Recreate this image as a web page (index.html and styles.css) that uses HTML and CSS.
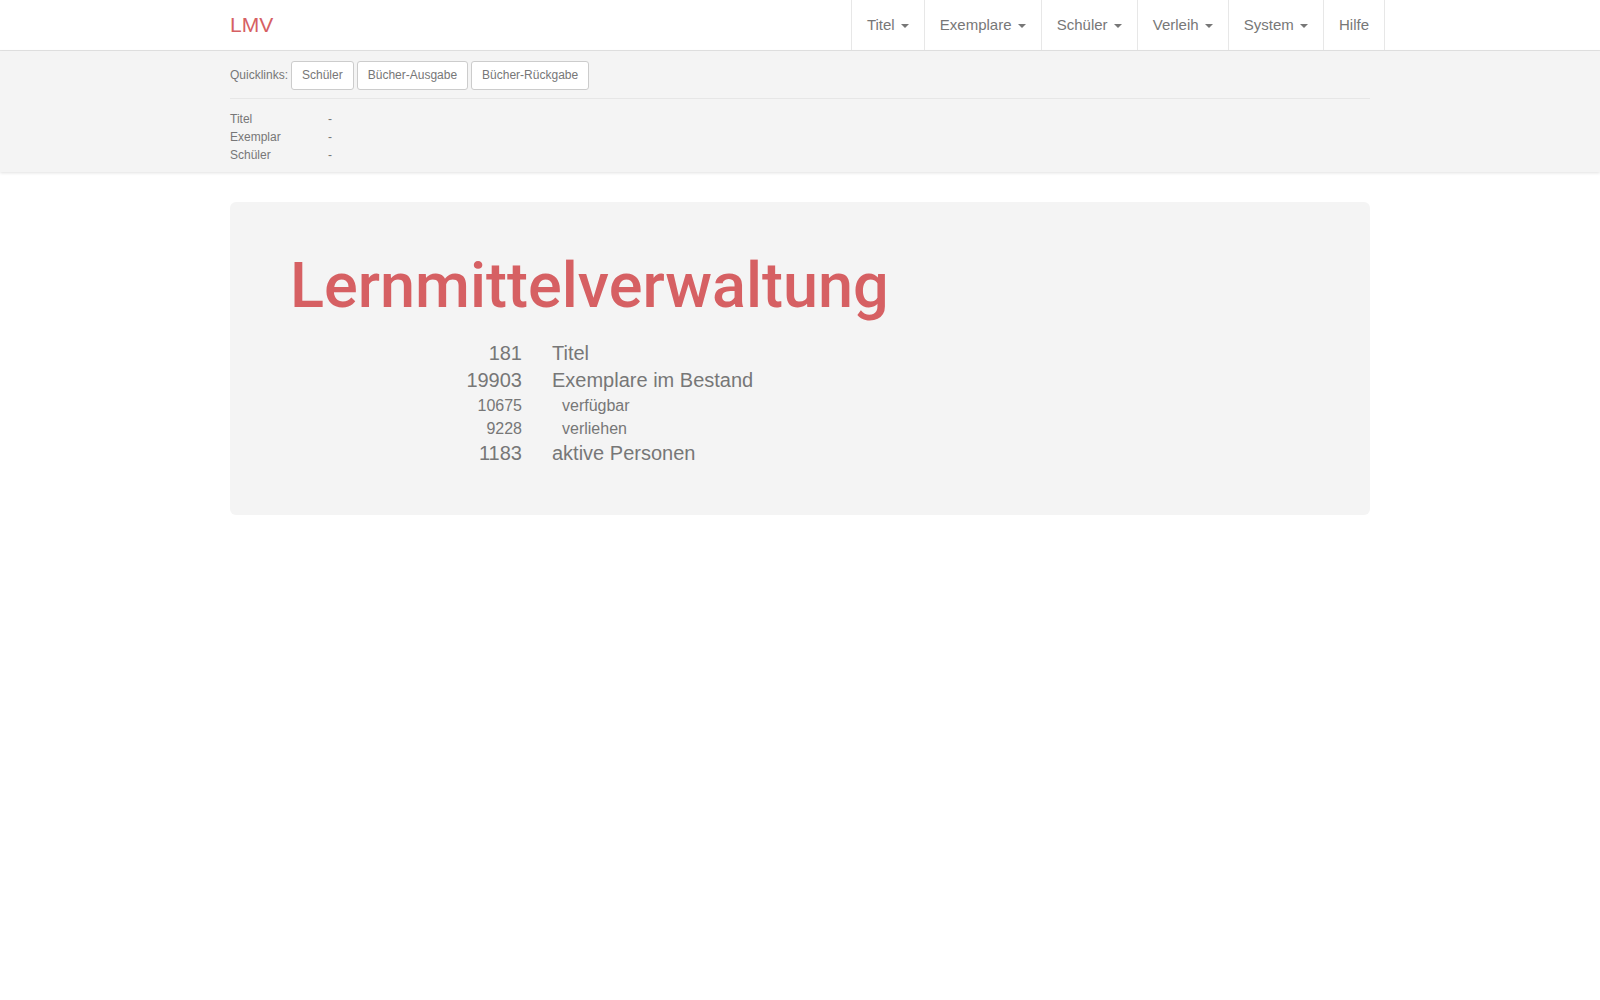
FILE: index.html
```html
<!DOCTYPE html>
<html lang="de">
<head>
<meta charset="utf-8">
<title>LMV</title>
<link rel="stylesheet" href="styles.css">
</head>
<body>
<nav class="navbar">
  <div class="container navbar-inner">
    <a class="brand" href="#">LMV</a>
    <ul class="nav">
      <li><a href="#">Titel <span class="caret"></span></a></li>
      <li><a href="#">Exemplare <span class="caret"></span></a></li>
      <li><a href="#">Schüler <span class="caret"></span></a></li>
      <li><a href="#">Verleih <span class="caret"></span></a></li>
      <li><a href="#">System <span class="caret"></span></a></li>
      <li><a href="#">Hilfe</a></li>
    </ul>
  </div>
</nav>
<div class="subbar">
  <div class="container">
    <div class="quicklinks">
      <span class="ql-label">Quicklinks:</span>
      <a class="btn" href="#">Schüler</a>
      <a class="btn" href="#">Bücher-Ausgabe</a>
      <a class="btn" href="#">Bücher-Rückgabe</a>
    </div>
    <hr class="divider">
    <div class="selection">
      <span class="sel-key">Titel</span><span class="sel-val">-</span>
      <span class="sel-key">Exemplar</span><span class="sel-val">-</span>
      <span class="sel-key">Schüler</span><span class="sel-val">-</span>
    </div>
  </div>
</div>
<main class="container">
  <section class="jumbotron">
    <h1 class="title">Lernmittelverwaltung</h1>
    <div class="stats">
      <span class="num big">181</span><span class="label big">Titel</span>
      <span class="num big">19903</span><span class="label big">Exemplare im Bestand</span>
      <span class="num small">10675</span><span class="label small sub">verfügbar</span>
      <span class="num small">9228</span><span class="label small sub">verliehen</span>
      <span class="num big">1183</span><span class="label big">aktive Personen</span>
    </div>
  </section>
</main>
</body>
</html>
```
FILE: styles.css
```css
* { box-sizing: border-box; }
html, body { margin: 0; padding: 0; }
body {
  font-family: "Liberation Sans", Arial, Helvetica, sans-serif;
  font-size: 15px;
  line-height: 20px;
  color: #777;
  background: #fff;
}
a { text-decoration: none; color: inherit; }

.container {
  width: 1170px;
  margin: 0 auto;
  padding: 0 15px;
}

/* Navbar */
.navbar {
  height: 51px;
  background: #fff;
  border-bottom: 1px solid #e3e3e3;
}
.navbar-inner {
  display: flex;
  justify-content: space-between;
  align-items: stretch;
  height: 50px;
}
.brand {
  font-size: 21px;
  line-height: 20px;
  padding: 15px 0;
  color: #d66063;
}
.nav {
  list-style: none;
  margin: 0 -15px 0 0;
  padding: 0;
  display: flex;
  border-right: 1px solid #e7e7e7;
}
.nav li {
  border-left: 1px solid #e7e7e7;
}
.nav a {
  display: block;
  padding: 15px;
  font-size: 15px;
  line-height: 20px;
  color: #777;
}
.caret {
  display: inline-block;
  width: 0;
  height: 0;
  margin-left: 2px;
  vertical-align: middle;
  border-top: 4px solid #777;
  border-left: 4px solid transparent;
  border-right: 4px solid transparent;
}

/* Sub bar */
.subbar {
  background: #f4f4f4;
  padding: 10px 0 8px;
  box-shadow: 0 1px 3px rgba(0, 0, 0, 0.12);
  font-size: 12px;
  line-height: 18px;
}
.quicklinks {
  display: flex;
  align-items: baseline;
  gap: 3px;
}
.btn {
  display: inline-block;
  padding: 5px 10px;
  font-size: 12px;
  line-height: 17px;
  background: #fff;
  border: 1px solid #ccc;
  border-radius: 3px;
  color: #777;
}
.divider {
  border: 0;
  border-top: 1px solid #e6e6e6;
  margin: 8px 0 11px;
}
.selection {
  display: grid;
  grid-template-columns: 98px auto;
}

/* Jumbotron */
.jumbotron {
  margin-top: 30px;
  background: #f4f4f4;
  border-radius: 6px;
  padding: 49px 60px 48px;
}
.title {
  margin: 0 0 20px;
  font-family: Roboto, "Liberation Sans", sans-serif;
  font-weight: 500;
  font-size: 63px;
  line-height: 1.1;
  color: #d66063;
}
.stats {
  display: grid;
  grid-template-columns: 232px auto;
  column-gap: 30px;
}
.num { text-align: right; }
.big { font-size: 20px; line-height: 27px; }
.small { font-size: 16px; line-height: 23px; }
.sub { padding-left: 10px; }
```
